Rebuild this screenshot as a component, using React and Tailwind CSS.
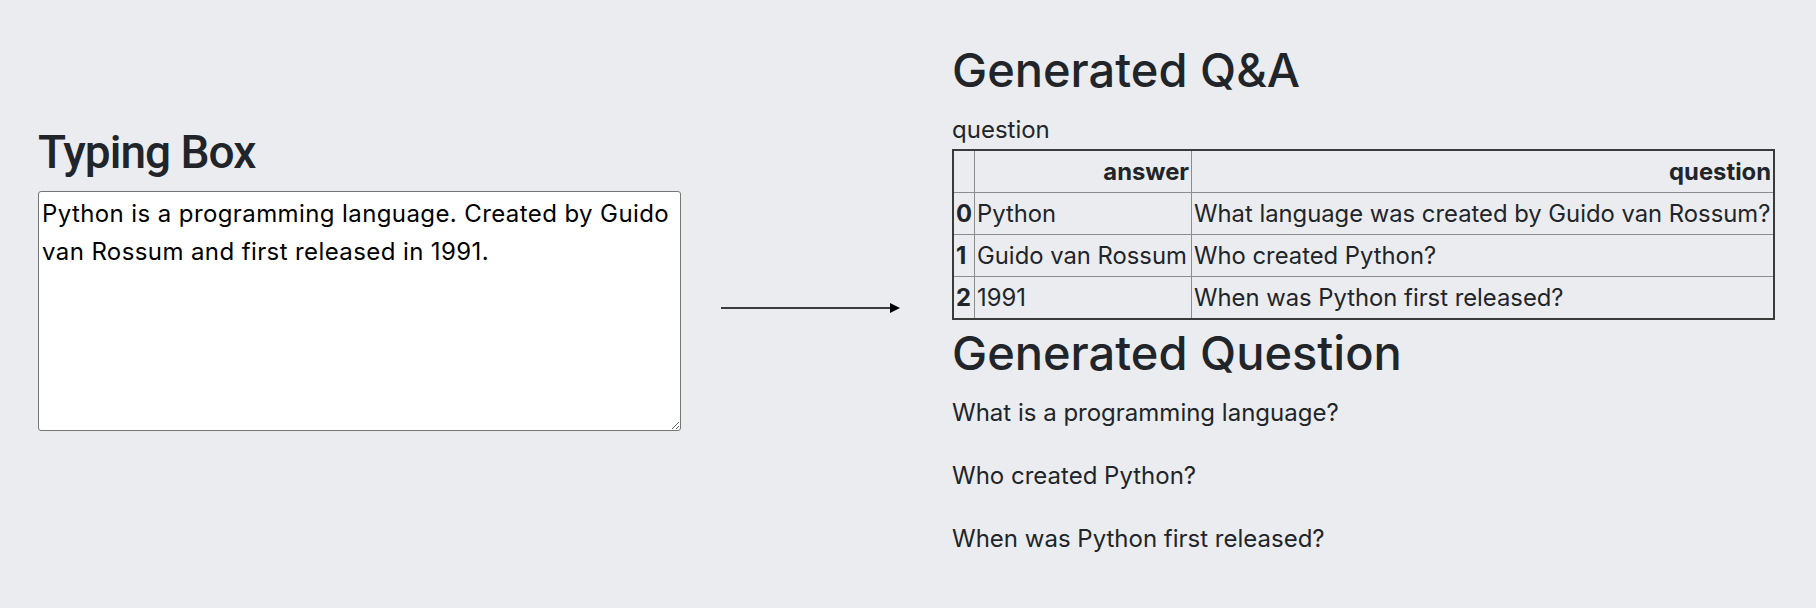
import { useState } from 'react';

const rows = [
    { id: 0, answer: "Python", question: "What language was created by Guido van Rossum?" },
    { id: 1, answer: "Guido van Rossum", question: "Who created Python?" },
    { id: 2, answer: "1991", question: "When was Python first released?" },
];

const generated = [
    "What is a programming language?",
    "Who created Python?",
    "When was Python first released?",
];

function Arrow() {
    return (
        <svg width="180" height="12" viewBox="0 0 180 12" className="block">
            <line x1="0" y1="6" x2="170" y2="6" stroke="#000" strokeWidth="1.6" />
            <polygon points="169,1 179,6 169,11" fill="#000" />
        </svg>
    );
}

export default function App() {
    const [text, setText] = useState("Python is a programming language. Created by Guido van Rossum and first released in 1991.");

    return (
        <div className="min-h-screen bg-[#ebecf0] text-[#212529] font-['Inter','Noto_Sans',sans-serif] flex items-start">
            <div className="ml-[38px] pt-[124px] w-[643px]">
                <h2 className="font-['Roboto','Inter',sans-serif] text-[46px] leading-[56px] font-medium tracking-[-1px] mb-[11px]">Typing Box</h2>
                <textarea value={text} onChange={(e) => setText(e.target.value)} spellCheck={false}
                    className="block w-full h-[240px] bg-white text-black border border-[#767676] rounded-[3px] p-[3px] text-[24px] leading-[38px] tracking-[0.4px] outline-none" />
            </div>

            <div className="ml-[40px] pt-[302px]">
                <Arrow />
            </div>

            <div className="ml-[51px] pt-[42px] w-[823px]">
                <h2 className="text-[47px] leading-[56px] font-medium mb-[14px]">Generated Q&amp;A</h2>
                <div className="text-[24px] leading-[35px] mb-[2px]">question</div>
                <table className="w-full border-collapse border-2 border-[#3a3a3a] text-[23.8px] leading-[41px]">
                    <thead>
                        <tr>
                            <th className="w-[21px] border border-[#8c8c8c] px-[2px] py-0"></th>
                            <th className="w-[217px] border border-[#8c8c8c] px-[2px] py-0 text-right font-bold">answer</th>
                            <th className="border border-[#8c8c8c] px-[2px] py-0 text-right font-bold">question</th>
                        </tr>
                    </thead>
                    <tbody>
                        {rows.map((r) => (
                            <tr key={r.id}>
                                <th className="border border-[#8c8c8c] px-[2px] py-0 text-left font-bold">{r.id}</th>
                                <td className="border border-[#8c8c8c] px-[2px] py-0 text-left whitespace-nowrap">{r.answer}</td>
                                <td className="border border-[#8c8c8c] px-[2px] py-0 text-left">{r.question}</td>
                            </tr>
                        ))}
                    </tbody>
                </table>

                <h2 className="text-[47px] leading-[56px] font-medium mt-[5px] mb-[14px]">Generated Question</h2>
                {generated.map((q) => (
                    <p key={q} className="text-[24px] leading-[35px] mb-[28px]">{q}</p>
                ))}
            </div>
        </div>
    );
}
